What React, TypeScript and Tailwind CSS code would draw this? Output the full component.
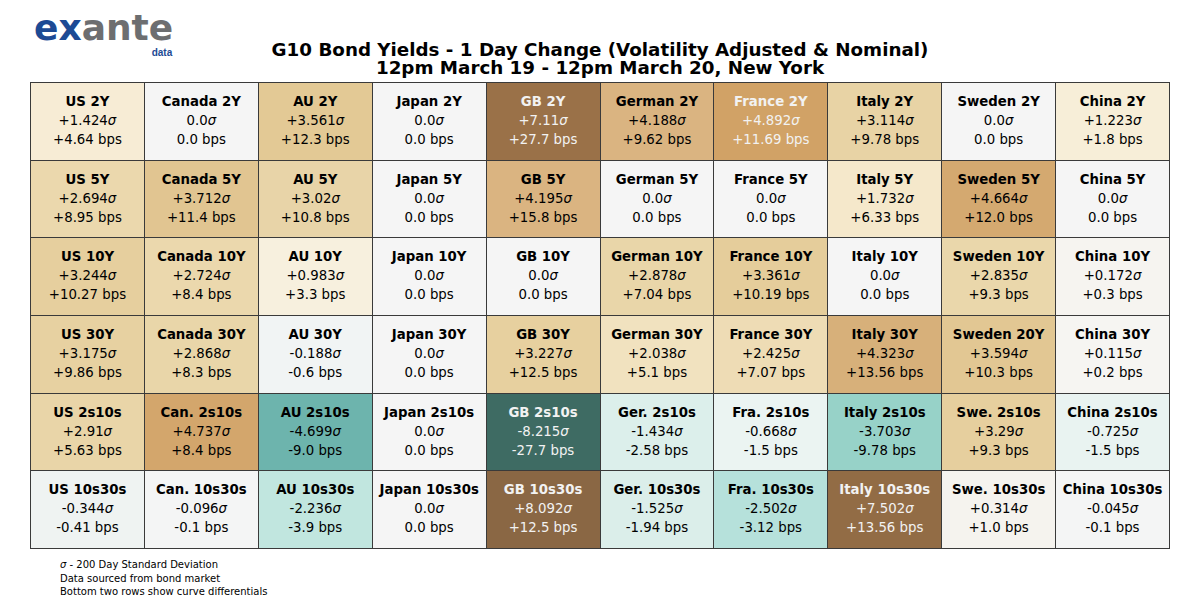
import React from "react";

type Cell = {
  label: string;
  sigma: string;
  bps: string;
  bg: string;
  light?: boolean;
};

// rows: 2Y, 5Y, 10Y, 30Y, 2s10s, 10s30s
const rows: Cell[][] = [
  [
    { label: "US 2Y", sigma: "+1.424", bps: "+4.64 bps", bg: "bg-[#f7ecd5]" },
    { label: "Canada 2Y", sigma: "0.0", bps: "0.0 bps", bg: "bg-[#f5f5f5]" },
    { label: "AU 2Y", sigma: "+3.561", bps: "+12.3 bps", bg: "bg-[#e3c995]" },
    { label: "Japan 2Y", sigma: "0.0", bps: "0.0 bps", bg: "bg-[#f5f5f5]" },
    { label: "GB 2Y", sigma: "+7.11", bps: "+27.7 bps", bg: "bg-[#9a7148]", light: true },
    { label: "German 2Y", sigma: "+4.188", bps: "+9.62 bps", bg: "bg-[#dab481]" },
    { label: "France 2Y", sigma: "+4.892", bps: "+11.69 bps", bg: "bg-[#d1a266]", light: true },
    { label: "Italy 2Y", sigma: "+3.114", bps: "+9.78 bps", bg: "bg-[#e8d3a5]" },
    { label: "Sweden 2Y", sigma: "0.0", bps: "0.0 bps", bg: "bg-[#f5f5f5]" },
    { label: "China 2Y", sigma: "+1.223", bps: "+1.8 bps", bg: "bg-[#f7eed8]" },
  ],
  [
    { label: "US 5Y", sigma: "+2.694", bps: "+8.95 bps", bg: "bg-[#ebd8ad]" },
    { label: "Canada 5Y", sigma: "+3.712", bps: "+11.4 bps", bg: "bg-[#e1c591]" },
    { label: "AU 5Y", sigma: "+3.02", bps: "+10.8 bps", bg: "bg-[#e8d4a8]" },
    { label: "Japan 5Y", sigma: "0.0", bps: "0.0 bps", bg: "bg-[#f5f5f5]" },
    { label: "GB 5Y", sigma: "+4.195", bps: "+15.8 bps", bg: "bg-[#dab481]" },
    { label: "German 5Y", sigma: "0.0", bps: "0.0 bps", bg: "bg-[#f5f5f5]" },
    { label: "France 5Y", sigma: "0.0", bps: "0.0 bps", bg: "bg-[#f5f5f5]" },
    { label: "Italy 5Y", sigma: "+1.732", bps: "+6.33 bps", bg: "bg-[#f5e8cb]" },
    { label: "Sweden 5Y", sigma: "+4.664", bps: "+12.0 bps", bg: "bg-[#d4a970]" },
    { label: "China 5Y", sigma: "0.0", bps: "0.0 bps", bg: "bg-[#f5f5f5]" },
  ],
  [
    { label: "US 10Y", sigma: "+3.244", bps: "+10.27 bps", bg: "bg-[#e6cf9e]" },
    { label: "Canada 10Y", sigma: "+2.724", bps: "+8.4 bps", bg: "bg-[#ebd8ad]" },
    { label: "AU 10Y", sigma: "+0.983", bps: "+3.3 bps", bg: "bg-[#f7f0de]" },
    { label: "Japan 10Y", sigma: "0.0", bps: "0.0 bps", bg: "bg-[#f5f5f5]" },
    { label: "GB 10Y", sigma: "0.0", bps: "0.0 bps", bg: "bg-[#f5f5f5]" },
    { label: "German 10Y", sigma: "+2.878", bps: "+7.04 bps", bg: "bg-[#e9d6a9]" },
    { label: "France 10Y", sigma: "+3.361", bps: "+10.19 bps", bg: "bg-[#e5cd9b]" },
    { label: "Italy 10Y", sigma: "0.0", bps: "0.0 bps", bg: "bg-[#f5f5f5]" },
    { label: "Sweden 10Y", sigma: "+2.835", bps: "+9.3 bps", bg: "bg-[#ead7ab]" },
    { label: "China 10Y", sigma: "+0.172", bps: "+0.3 bps", bg: "bg-[#f6f4f0]" },
  ],
  [
    { label: "US 30Y", sigma: "+3.175", bps: "+9.86 bps", bg: "bg-[#e7d1a1]" },
    { label: "Canada 30Y", sigma: "+2.868", bps: "+8.3 bps", bg: "bg-[#e9d6a9]" },
    { label: "AU 30Y", sigma: "-0.188", bps: "-0.6 bps", bg: "bg-[#f1f4f4]" },
    { label: "Japan 30Y", sigma: "0.0", bps: "0.0 bps", bg: "bg-[#f5f5f5]" },
    { label: "GB 30Y", sigma: "+3.227", bps: "+12.5 bps", bg: "bg-[#e7d09f]" },
    { label: "German 30Y", sigma: "+2.038", bps: "+5.1 bps", bg: "bg-[#f1e2bf]" },
    { label: "France 30Y", sigma: "+2.425", bps: "+7.07 bps", bg: "bg-[#eedcb5]" },
    { label: "Italy 30Y", sigma: "+4.323", bps: "+13.56 bps", bg: "bg-[#d7b07a]" },
    { label: "Sweden 20Y", sigma: "+3.594", bps: "+10.3 bps", bg: "bg-[#e2c793]" },
    { label: "China 30Y", sigma: "+0.115", bps: "+0.2 bps", bg: "bg-[#f6f5f2]" },
  ],
  [
    { label: "US 2s10s", sigma: "+2.91", bps: "+5.63 bps", bg: "bg-[#e9d5a8]" },
    { label: "Can. 2s10s", sigma: "+4.737", bps: "+8.4 bps", bg: "bg-[#d3a66c]" },
    { label: "AU 2s10s", sigma: "-4.699", bps: "-9.0 bps", bg: "bg-[#6db4ad]" },
    { label: "Japan 2s10s", sigma: "0.0", bps: "0.0 bps", bg: "bg-[#f5f5f5]" },
    { label: "GB 2s10s", sigma: "-8.215", bps: "-27.7 bps", bg: "bg-[#3e6b63]", light: true },
    { label: "Ger. 2s10s", sigma: "-1.434", bps: "-2.58 bps", bg: "bg-[#dcefeb]" },
    { label: "Fra. 2s10s", sigma: "-0.668", bps: "-1.5 bps", bg: "bg-[#ebf4f2]" },
    { label: "Italy 2s10s", sigma: "-3.703", bps: "-9.78 bps", bg: "bg-[#97d2c8]" },
    { label: "Swe. 2s10s", sigma: "+3.29", bps: "+9.3 bps", bg: "bg-[#e6cf9e]" },
    { label: "China 2s10s", sigma: "-0.725", bps: "-1.5 bps", bg: "bg-[#e9f3f1]" },
  ],
  [
    { label: "US 10s30s", sigma: "-0.344", bps: "-0.41 bps", bg: "bg-[#eff3f2]" },
    { label: "Can. 10s30s", sigma: "-0.096", bps: "-0.1 bps", bg: "bg-[#f4f5f5]" },
    { label: "AU 10s30s", sigma: "-2.236", bps: "-3.9 bps", bg: "bg-[#c1e6df]" },
    { label: "Japan 10s30s", sigma: "0.0", bps: "0.0 bps", bg: "bg-[#f5f5f5]" },
    { label: "GB 10s30s", sigma: "+8.092", bps: "+12.5 bps", bg: "bg-[#8a6744]", light: true },
    { label: "Ger. 10s30s", sigma: "-1.525", bps: "-1.94 bps", bg: "bg-[#dbeeea]" },
    { label: "Fra. 10s30s", sigma: "-2.502", bps: "-3.12 bps", bg: "bg-[#b6e1db]" },
    { label: "Italy 10s30s", sigma: "+7.502", bps: "+13.56 bps", bg: "bg-[#926c45]", light: true },
    { label: "Swe. 10s30s", sigma: "+0.314", bps: "+1.0 bps", bg: "bg-[#f5f3ee]" },
    { label: "China 10s30s", sigma: "-0.045", bps: "-0.1 bps", bg: "bg-[#f4f5f5]" },
  ],
];

function Logo() {
  return (
    <div className="flex flex-col items-end pl-[34px] pt-[9px]">
      <div className="font-['DejaVu_Sans',sans-serif] text-[36px] font-bold leading-[38px]">
        <span className="text-[#1d4a94]">ex</span>
        <span className="text-[#6d6e70]">ante</span>
      </div>
      <div className="pr-[1px] font-['Liberation_Sans',sans-serif] text-[10px] font-bold leading-[11px] text-[#1d4a94]">
        data
      </div>
    </div>
  );
}

function TableCell({ cell }: { cell: Cell }) {
  return (
    <div
      className={`flex h-[77.7px] flex-col items-center justify-center border-r border-b border-[#3a3a3a] pb-[2px] text-[13.3px] leading-[19px] ${cell.bg} ${
        cell.light ? "text-[#f2f2f2]" : "text-black"
      }`}
    >
      <span className="font-bold">{cell.label}</span>
      <span>
        {cell.sigma}
        <span className="italic">σ</span>
      </span>
      <span>{cell.bps}</span>
    </div>
  );
}

export default function App() {
  return (
    <div className="h-[600px] w-[1200px] bg-white font-['DejaVu_Sans',sans-serif] text-black">
      <div className="grid h-[82px] grid-cols-[1fr_auto_1fr]">
        <div className="flex items-start">
          <Logo />
        </div>
        <div className="flex flex-col items-center pt-[40.5px] text-[18.3px] font-bold leading-[18.3px]">
          <span>G10 Bond Yields - 1 Day Change (Volatility Adjusted &amp; Nominal)</span>
          <span>12pm March 19 - 12pm March 20, New York</span>
        </div>
        <div />
      </div>

      <div className="mx-[30px] grid grid-cols-10 border-t border-l border-[#3a3a3a]">
        {rows.flat().map((cell) => (
          <TableCell key={cell.label} cell={cell} />
        ))}
      </div>

      <div className="pl-[60px] pt-[9px] text-[10px] leading-[13.5px]">
        <div>
          <span className="italic">σ</span> - 200 Day Standard Deviation
        </div>
        <div>Data sourced from bond market</div>
        <div>Bottom two rows show curve differentials</div>
      </div>
    </div>
  );
}
